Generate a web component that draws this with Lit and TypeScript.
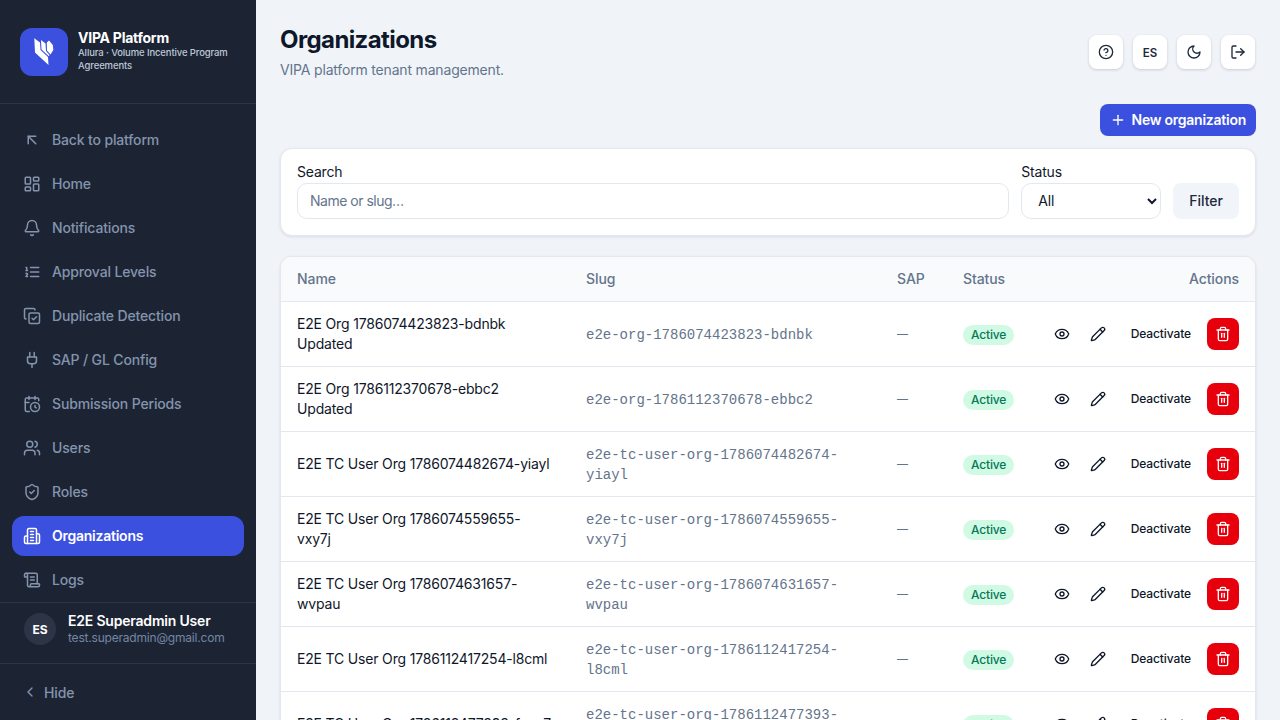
import { LitElement, html, svg, css } from 'lit';
import { customElement } from 'lit/decorators.js';

const ICONS: Record<string, unknown> = {
    back: svg`<path d="M7 17V7h10"/><path d="M17 17 7 7"/>`,
    home: svg`<rect x="3" y="3" width="7" height="9" rx="1"/><rect x="14" y="3" width="7" height="5" rx="1"/><rect x="14" y="12" width="7" height="9" rx="1"/><rect x="3" y="16" width="7" height="5" rx="1"/>`,
    bell: svg`<path d="M10.268 21a2 2 0 0 0 3.464 0"/><path d="M3.262 15.326A1 1 0 0 0 4 17h16a1 1 0 0 0 .74-1.673C19.41 13.956 18 12.499 18 8A6 6 0 0 0 6 8c0 4.499-1.411 5.956-2.738 7.326"/>`,
    levels: svg`<path d="M10 12h11"/><path d="M10 18h11"/><path d="M10 6h11"/><path d="M4 10h2"/><path d="M4 6h1v4"/><path d="M6 18H4c0-1 2-2 2-3s-1-1.5-2-1"/>`,
    copy: svg`<path d="m12 15 2 2 4-4"/><rect x="8" y="8" width="14" height="14" rx="2"/><path d="M4 16c-1.1 0-2-.9-2-2V4c0-1.1.9-2 2-2h10c1.1 0 2 .9 2 2"/>`,
    plug: svg`<path d="M12 22v-5"/><path d="M9 8V2"/><path d="M15 8V2"/><path d="M18 8v5a4 4 0 0 1-4 4h-4a4 4 0 0 1-4-4V8Z"/>`,
    calendar: svg`<path d="M16 14v2.2l1.6 1"/><path d="M16 2v4"/><path d="M21 7.5V6a2 2 0 0 0-2-2H5a2 2 0 0 0-2 2v14a2 2 0 0 0 2 2h3.5"/><path d="M3 10h5"/><path d="M8 2v4"/><circle cx="16" cy="16" r="6"/>`,
    users: svg`<path d="M16 21v-2a4 4 0 0 0-4-4H6a4 4 0 0 0-4 4v2"/><circle cx="9" cy="7" r="4"/><path d="M22 21v-2a4 4 0 0 0-3-3.87"/><path d="M16 3.13a4 4 0 0 1 0 7.75"/>`,
    shield: svg`<path d="M20 13c0 5-3.5 7.5-7.66 8.95a1 1 0 0 1-.67-.01C7.5 20.5 4 18 4 13V6a1 1 0 0 1 1-1c2 0 4.5-1.2 6.24-2.72a1.17 1.17 0 0 1 1.52 0C14.51 3.81 17 5 19 5a1 1 0 0 1 1 1z"/><path d="m9 12 2 2 4-4"/>`,
    building: svg`<path d="M6 22V4a2 2 0 0 1 2-2h8a2 2 0 0 1 2 2v18Z"/><path d="M6 12H4a2 2 0 0 0-2 2v6a2 2 0 0 0 2 2h2"/><path d="M18 9h2a2 2 0 0 1 2 2v9a2 2 0 0 1-2 2h-2"/><path d="M10 6h4"/><path d="M10 10h4"/><path d="M10 14h4"/><path d="M10 18h4"/>`,
    scroll: svg`<path d="M15 12h-5"/><path d="M15 8h-5"/><path d="M19 17V5a2 2 0 0 0-2-2H4"/><path d="M8 21h12a2 2 0 0 0 2-2v-1a1 1 0 0 0-1-1H11a1 1 0 0 0-1 1v1a2 2 0 1 1-4 0V5a2 2 0 1 0-4 0v2a1 1 0 0 0 1 1h3"/>`,
    chevron: svg`<path d="m15 18-6-6 6-6"/>`,
    help: svg`<circle cx="12" cy="12" r="10"/><path d="M9.09 9a3 3 0 0 1 5.83 1c0 2-3 3-3 3"/><path d="M12 17h.01"/>`,
    moon: svg`<path d="M12 3a6 6 0 0 0 9 9 9 9 0 1 1-9-9Z"/>`,
    logout: svg`<path d="M9 21H5a2 2 0 0 1-2-2V5a2 2 0 0 1 2-2h4"/><path d="m16 17 5-5-5-5"/><path d="M21 12H9"/>`,
    plus: svg`<path d="M5 12h14"/><path d="M12 5v14"/>`,
    eye: svg`<path d="M2.062 12.348a1 1 0 0 1 0-.696 10.75 10.75 0 0 1 19.876 0 1 1 0 0 1 0 .696 10.75 10.75 0 0 1-19.876 0"/><circle cx="12" cy="12" r="3"/>`,
    pencil: svg`<path d="M21.174 6.812a1 1 0 0 0-3.986-3.987L3.842 16.174a2 2 0 0 0-.5.83l-1.321 4.352a.5.5 0 0 0 .623.622l4.353-1.32a2 2 0 0 0 .83-.497z"/><path d="m15 5 4 4"/>`,
    trash: svg`<path d="M3 6h18"/><path d="M19 6v14c0 1-1 2-2 2H7c-1 0-2-1-2-2V6"/><path d="M8 6V4c0-1 1-2 2-2h4c1 0 2 1 2 2v2"/><line x1="10" x2="10" y1="11" y2="17"/><line x1="14" x2="14" y1="11" y2="17"/>`,
};

const icon = (name: string, size = 16) => html`
    <svg width=${size} height=${size} viewBox="0 0 24 24" fill="none" stroke="currentColor"
         stroke-width="2" stroke-linecap="round" stroke-linejoin="round">${ICONS[name]}</svg>`;

const NAV = [
    { label: 'Back to platform', icon: 'back' },
    { label: 'Home', icon: 'home' },
    { label: 'Notifications', icon: 'bell' },
    { label: 'Approval Levels', icon: 'levels' },
    { label: 'Duplicate Detection', icon: 'copy' },
    { label: 'SAP / GL Config', icon: 'plug' },
    { label: 'Submission Periods', icon: 'calendar' },
    { label: 'Users', icon: 'users' },
    { label: 'Roles', icon: 'shield' },
    { label: 'Organizations', icon: 'building', active: true },
    { label: 'Logs', icon: 'scroll' },
];

const ORGS = [
    { name: 'E2E Org 1786074423823-bdnbk Updated', slug: 'e2e-org-1786074423823-bdnbk' },
    { name: 'E2E Org 1786112370678-ebbc2 Updated', slug: 'e2e-org-1786112370678-ebbc2' },
    { name: 'E2E TC User Org 1786074482674-yiayl', slug: 'e2e-tc-user-org-1786074482674-yiayl' },
    { name: 'E2E TC User Org 1786074559655-vxy7j', slug: 'e2e-tc-user-org-1786074559655-vxy7j' },
    { name: 'E2E TC User Org 1786074631657-wvpau', slug: 'e2e-tc-user-org-1786074631657-wvpau' },
    { name: 'E2E TC User Org 1786112417254-l8cml', slug: 'e2e-tc-user-org-1786112417254-l8cml' },
    { name: 'E2E TC User Org 1786112477393-fxna7', slug: 'e2e-tc-user-org-1786112477393-fxna7' },
];

@customElement('app-root')
export class AppRoot extends LitElement {
    static styles = css`
        :host {
            display: flex;
            height: 720px;
            overflow: hidden;
            background: #f0f4f9;
            color: #0f172a;
            font-family: Inter, "Liberation Sans", sans-serif;
            font-size: 14px;
        }
        svg {
            display: block;
            flex: none;
        }
        .sidebar {
            width: 256px;
            flex: none;
            display: flex;
            flex-direction: column;
            background: #1c2434;
            color: #8494ad;
            letter-spacing: -0.15px;
        }
        .brand {
            display: flex;
            align-items: center;
            gap: 10px;
            height: 104px;
            box-sizing: border-box;
            padding: 0 20px;
            border-bottom: 1px solid #2c3446;
        }
        .logo {
            width: 48px;
            height: 48px;
            flex: none;
            border-radius: 12px;
            background: #3c50e0;
            display: flex;
            align-items: center;
            justify-content: center;
        }
        .brand-text {
            padding-bottom: 2px;
        }
        .brand-name {
            font-size: 14px;
            font-weight: 700;
            line-height: 16px;
            letter-spacing: -0.25px;
            color: #fff;
        }
        .brand-sub {
            font-size: 9.5px;
            font-weight: 500;
            line-height: 13px;
            letter-spacing: -0.12px;
            color: #bcc7d6;
        }
        nav {
            flex: 1;
            min-height: 0;
            overflow: hidden;
            display: flex;
            flex-direction: column;
            gap: 4px;
            padding: 16px 12px 0;
        }
        .nav-item {
            display: flex;
            align-items: center;
            gap: 11px;
            height: 40px;
            flex: none;
            padding: 0 11px;
            border-radius: 12px;
            font-weight: 500;
        }
        .nav-item span {
            margin-bottom: 2px;
        }
        .nav-item.active {
            background: #3c50e0;
            color: #fff;
            font-weight: 600;
            letter-spacing: -0.25px;
        }
        .user {
            box-sizing: border-box;
            display: flex;
            gap: 12px;
            height: 62px;
            padding: 10px 24px 0;
            border-top: 1px solid #2c3446;
            border-bottom: 1px solid #2c3446;
        }
        .avatar {
            width: 32px;
            height: 32px;
            flex: none;
            border-radius: 50%;
            background: #2c3446;
            color: #fff;
            font-size: 12px;
            font-weight: 700;
            display: flex;
            align-items: center;
            justify-content: center;
        }
        .user-text {
            margin-top: -1px;
        }
        .user-name {
            color: #fff;
            font-weight: 600;
            line-height: 18px;
            letter-spacing: -0.2px;
        }
        .user-mail {
            font-size: 12px;
            line-height: 16px;
            letter-spacing: -0.2px;
            color: #7486a3;
        }
        .hide {
            display: flex;
            align-items: center;
            gap: 6px;
            height: 56px;
            padding: 0 22px;
            font-weight: 500;
        }
        main {
            flex: 1;
            min-width: 0;
            padding: 24px 24px 0;
            letter-spacing: -0.18px;
        }
        .page-head {
            display: flex;
            justify-content: space-between;
            height: 56px;
        }
        h1 {
            margin: 0;
            font-size: 24px;
            font-weight: 700;
            line-height: 32px;
            letter-spacing: -0.6px;
        }
        .subtitle {
            margin-top: 4px;
            line-height: 20px;
            color: #64748b;
        }
        .top-actions {
            display: flex;
            gap: 10px;
            padding: 11px 1px 0 0;
        }
        .top-btn {
            width: 34px;
            height: 34px;
            padding: 0;
            border: none;
            border-radius: 8px;
            background: #fff;
            color: #1e293b;
            box-shadow: 0 1px 3px rgba(15, 23, 42, 0.18);
            font: 600 11.5px Inter, sans-serif;
            display: flex;
            align-items: center;
            justify-content: center;
        }
        .top-btn.lang {
            padding-top: 2px;
        }
        .toolbar {
            display: flex;
            justify-content: flex-end;
            margin-top: 24px;
        }
        .primary {
            display: flex;
            align-items: center;
            gap: 6px;
            height: 32px;
            padding: 0 10px;
            border: none;
            border-radius: 8px;
            background: #3c50e0;
            color: #fff;
            font: 600 14px Inter, sans-serif;
            letter-spacing: -0.25px;
        }
        .primary span {
            margin-bottom: 2px;
        }
        .card {
            box-sizing: border-box;
            background: #fff;
            border: 1px solid #e2e8f0;
            border-radius: 12px;
            box-shadow: 0 1px 3px rgba(15, 23, 42, 0.1);
        }
        .filters {
            display: flex;
            align-items: flex-end;
            gap: 12px;
            margin-top: 12px;
            padding: 16px;
            height: 88px;
        }
        .field {
            display: flex;
            flex-direction: column;
        }
        .field.grow {
            flex: 1;
        }
        label {
            line-height: 14px;
            margin-bottom: 4px;
        }
        input, select {
            box-sizing: border-box;
            height: 36px;
            border: 1px solid #e2e8f0;
            border-radius: 10px;
            background: #fff;
            font: 14px Inter, sans-serif;
            letter-spacing: -0.18px;
            color: #0f172a;
        }
        input {
            width: 100%;
            padding: 0 12px 2px;
        }
        input::placeholder {
            color: #64748b;
            opacity: 1;
            letter-spacing: -0.5px;
        }
        select {
            width: 140px;
            padding: 0 0 2px 12px;
        }
        .ghost {
            height: 36px;
            padding: 0 16px 2px;
            border: none;
            border-radius: 8px;
            background: #f1f5f9;
            color: #1e293b;
            font: 500 14px Inter, sans-serif;
        }
        .table-card {
            margin-top: 20px;
            overflow: hidden;
        }
        table {
            width: 100%;
            border-collapse: collapse;
            table-layout: fixed;
        }
        th {
            height: 42px;
            padding: 0 16px 2px;
            background: #f8fafc;
            border-bottom: 1px solid #e2e8f0;
            color: #64748b;
            font-weight: 500;
            letter-spacing: -0.08px;
            text-align: left;
        }
        td {
            height: 64px;
            padding: 0 16px;
            border-bottom: 1px solid #e2e8f0;
            line-height: 20px;
            font-weight: 400;
        }
        .col-name { width: 257px; }
        .col-slug { width: 279px; }
        .col-sap { width: 34px; }
        .col-status { width: 51px; }
        th.col-actions { text-align: right; }
        td.slug {
            height: 62px;
            padding-top: 2px;
            font-family: "Liberation Mono", monospace;
            letter-spacing: 0;
            color: #64748b;
        }
        .dash {
            color: #64748b;
            font-size: 11px;
        }
        .badge {
            display: inline-block;
            padding: 0 8px;
            border-radius: 10px;
            background: #d1fae5;
            color: #047857;
            font-size: 12px;
            font-weight: 500;
            line-height: 20px;
            letter-spacing: -0.15px;
            vertical-align: middle;
        }
        .row-actions {
            display: flex;
            align-items: center;
            justify-content: flex-end;
            gap: 4px;
        }
        .row-btn {
            width: 32px;
            height: 32px;
            flex: none;
            padding: 0;
            border: none;
            border-radius: 8px;
            background: transparent;
            color: #0f172a;
            display: flex;
            align-items: center;
            justify-content: center;
        }
        .text-btn {
            height: 32px;
            flex: none;
            padding: 0 12px 2px 13px;
            border: none;
            background: transparent;
            color: #0f172a;
            font: 500 12px Inter, sans-serif;
            letter-spacing: -0.1px;
        }
        .row-btn.danger {
            background: #e7000b;
            color: #fff;
        }
    `;

    private renderLogo() {
        return html`
            <svg width="20" height="28" viewBox="0 0 20 28" fill="#fff">
                <path d="M0.3 0.3 6 4.5 6.5 12 14 19 14.5 27 1 14.5Z"/>
                <path d="M7 2 11.5 5.5 12 13 15.5 17 14.8 18.3 7.5 11.5Z"/>
                <path d="M12.8 4.5 15 2.5 18.8 7 19.3 12 16.5 16.5 13 12.5Z"/>
            </svg>`;
    }

    private renderSidebar() {
        return html`
            <aside class="sidebar">
                <div class="brand">
                    <div class="logo">${this.renderLogo()}</div>
                    <div class="brand-text">
                        <div class="brand-name">VIPA Platform</div>
                        <div class="brand-sub">Allura · Volume Incentive Program Agreements</div>
                    </div>
                </div>
                <nav>
                    ${NAV.map(item => html`
                        <div class="nav-item ${item.active ? 'active' : ''}">
                            ${icon(item.icon, 18)}<span>${item.label}</span>
                        </div>
                    `)}
                </nav>
                <div class="user">
                    <div class="avatar">ES</div>
                    <div class="user-text">
                        <div class="user-name">E2E Superadmin User</div>
                        <div class="user-mail">test.superadmin@gmail.com</div>
                    </div>
                </div>
                <div class="hide">${icon('chevron')}<span>Hide</span></div>
            </aside>
        `;
    }

    private renderRow(org: { name: string; slug: string }) {
        return html`
            <tr>
                <td>${org.name}</td>
                <td class="slug">${org.slug}</td>
                <td class="dash">—</td>
                <td><span class="badge">Active</span></td>
                <td>
                    <div class="row-actions">
                        <button class="row-btn">${icon('eye')}</button>
                        <button class="row-btn">${icon('pencil')}</button>
                        <button class="text-btn">Deactivate</button>
                        <button class="row-btn danger">${icon('trash')}</button>
                    </div>
                </td>
            </tr>
        `;
    }

    render() {
        return html`
            ${this.renderSidebar()}
            <main>
                <div class="page-head">
                    <div>
                        <h1>Organizations</h1>
                        <div class="subtitle">VIPA platform tenant management.</div>
                    </div>
                    <div class="top-actions">
                        <button class="top-btn">${icon('help')}</button>
                        <button class="top-btn lang">ES</button>
                        <button class="top-btn">${icon('moon')}</button>
                        <button class="top-btn">${icon('logout')}</button>
                    </div>
                </div>
                <div class="toolbar">
                    <button class="primary">${icon('plus')}<span>New organization</span></button>
                </div>
                <div class="card filters">
                    <div class="field grow">
                        <label>Search</label>
                        <input placeholder="Name or slug…" />
                    </div>
                    <div class="field">
                        <label>Status</label>
                        <select><option>All</option></select>
                    </div>
                    <button class="ghost">Filter</button>
                </div>
                <div class="card table-card">
                    <table>
                        <thead>
                            <tr>
                                <th class="col-name">Name</th>
                                <th class="col-slug">Slug</th>
                                <th class="col-sap">SAP</th>
                                <th class="col-status">Status</th>
                                <th class="col-actions">Actions</th>
                            </tr>
                        </thead>
                        <tbody>${ORGS.map(org => this.renderRow(org))}</tbody>
                    </table>
                </div>
            </main>
        `;
    }
}
